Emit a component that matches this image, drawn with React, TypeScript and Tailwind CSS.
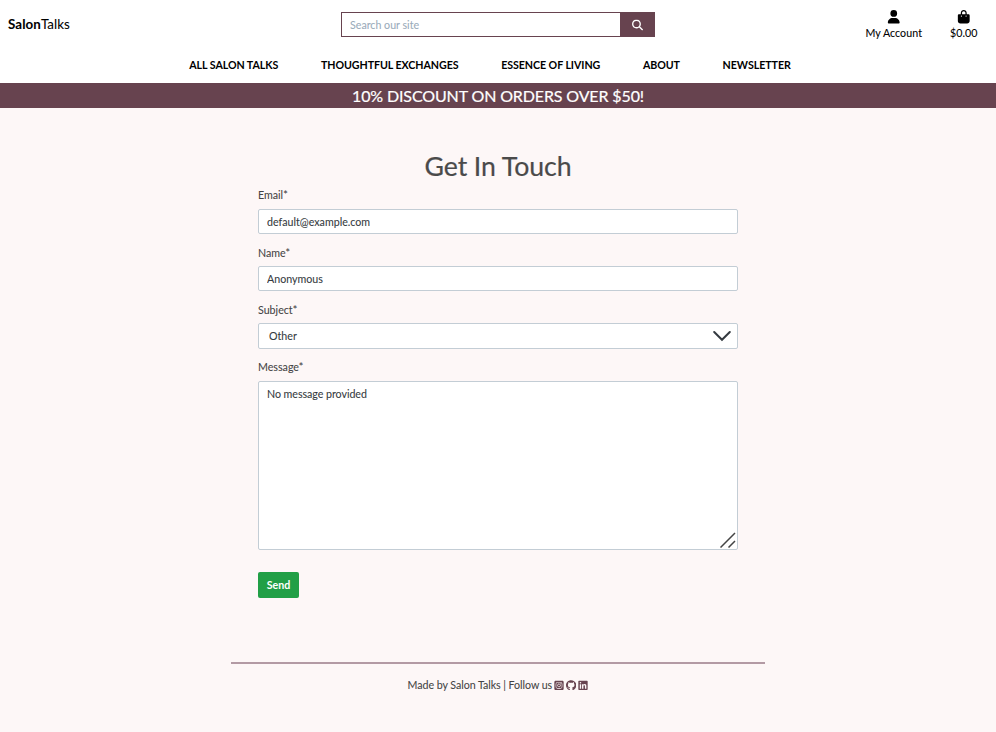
import React from "react";
import {
  FaUser,
  FaBagShopping,
  FaMagnifyingGlass,
  FaSquareInstagram,
  FaGithub,
  FaLinkedin,
} from "react-icons/fa6";

const links = ["ALL SALON TALKS", "THOUGHTFUL EXCHANGES", "ESSENCE OF LIVING", "ABOUT", "NEWSLETTER"];

const field =
  "block w-full rounded-[2px] border border-[#c3cdd5] bg-white px-2 text-[10.667px] leading-4 text-[#343a40] outline-none";

function Label({ children, htmlFor }: { children: React.ReactNode; htmlFor: string }) {
  return (
    <label htmlFor={htmlFor} className="block h-4 leading-4">
      {children}
    </label>
  );
}

export default function App() {
  return (
    <div className="flex min-h-screen flex-col bg-[#fdf7f7] font-['Lato',sans-serif] text-[10.667px] leading-4 text-[#444444] [-webkit-text-stroke:0.07px]">
      <header className="h-[83px] bg-white text-black">
        <div className="flex h-12 items-center">
          <a className="w-[341px] pl-2 text-[13.333px] leading-5 tracking-[0.08px]">
            <strong className="font-bold">Salon</strong>Talks
          </a>
          <form className="flex h-[25px] w-[314px]">
            <input
              className="min-w-0 flex-1 border border-r-0 border-[#67434f] bg-white px-2 pt-[2px] text-[10.667px] outline-none placeholder:text-[#9aabba]"
              placeholder="Search our site"
            />
            <button type="button" className="flex w-[35px] items-center justify-center bg-[#67434f] text-white">
              <FaMagnifyingGlass className="size-[11px] translate-y-[0.5px]" />
            </button>
          </form>
          <div className="flex flex-1 justify-end gap-[28px] pr-[18.5px] pt-[2px]">
            <a className="flex flex-col items-center">
              <FaUser className="mt-px mb-px h-[13.5px] w-[13.5px]" />
              <span className="leading-4 tracking-[0.05px]">My Account</span>
            </a>
            <a className="flex flex-col items-center">
              <FaBagShopping className="mt-px mb-px h-[13.5px] w-[13.5px]" />
              <span className="leading-4 tracking-[0.05px]">$0.00</span>
            </a>
          </div>
        </div>
        <nav className="flex h-[34px] items-center justify-center gap-[42.667px] pr-4 font-bold tracking-[-0.06px] [-webkit-text-stroke:0px]">
          {links.map((l) => (
            <a key={l}>{l}</a>
          ))}
        </nav>
      </header>

      <div className="h-[25px] bg-[#67434f] pt-px text-center text-[16px] leading-[23px] tracking-[-0.13px] text-white [-webkit-text-stroke:0.2px]">
        10% DISCOUNT ON ORDERS OVER $50!
      </div>

      <main className="mx-auto w-[480px] pt-[42px]">
        <h1 className="h-[37px] text-center text-[26.667px] leading-8 tracking-[-0.08px] text-[#4a4a4a] [-webkit-text-stroke:0.2px]">
          Get In Touch
        </h1>
        <form>
          <Label htmlFor="email">Email*</Label>
          <input id="email" className={`${field} mt-[6px] h-[25px]`} defaultValue="default@example.com" />
          <div className="mt-[11px]">
            <Label htmlFor="name">Name*</Label>
          </div>
          <input id="name" className={`${field} mt-[5px] h-[25px]`} defaultValue="Anonymous" />
          <div className="mt-[11px]">
            <Label htmlFor="subject">Subject*</Label>
          </div>
          <div id="subject" className={`${field} mt-[5px] flex h-[26px] items-center justify-between pl-[10px] pr-[6px]`}>
            Other
            <svg width="18" height="12" viewBox="0 0 18 12" fill="none" stroke="#343a40" strokeWidth="2" strokeLinecap="round">
              <path d="M1.2 2 9 9.8 16.8 2" />
            </svg>
          </div>
          <div className="mt-[10px]">
            <Label htmlFor="message">Message*</Label>
          </div>
          <div className="relative mt-[6px]">
            <textarea
              id="message"
              className={`${field} h-[169px] resize-none pt-1 tracking-[-0.04px]`}
              defaultValue="No message provided"
            />
            <svg className="absolute right-[2px] bottom-[2px]" width="16" height="16" viewBox="0 0 16 16" stroke="#444" strokeWidth="1.5">
              <path d="M.5 15.5 15 1M8.5 15.5 15 9" />
            </svg>
          </div>
          <button
            type="button"
            className="mt-[22px] flex h-[26px] w-[41px] items-center justify-center rounded-[2px] bg-[#219f46] font-bold text-white [-webkit-text-stroke:0px]"
          >
            Send
          </button>
        </form>
      </main>

      <footer className="mx-auto mt-[64px] flex w-[534px] justify-center border-t-2 border-[#b39aa4] pt-[13px]">
        <p className="flex items-center tracking-[-0.05px]">
          Made by Salon Talks | Follow us
          <span className="ml-[2px] flex gap-[2px] text-[#67434f]">
            <FaSquareInstagram className="h-[10.667px] w-[10px]" />
            <FaGithub className="h-[10.667px] w-[10.3px]" />
            <FaLinkedin className="h-[10.667px] w-[10px]" />
          </span>
        </p>
      </footer>
    </div>
  );
}
